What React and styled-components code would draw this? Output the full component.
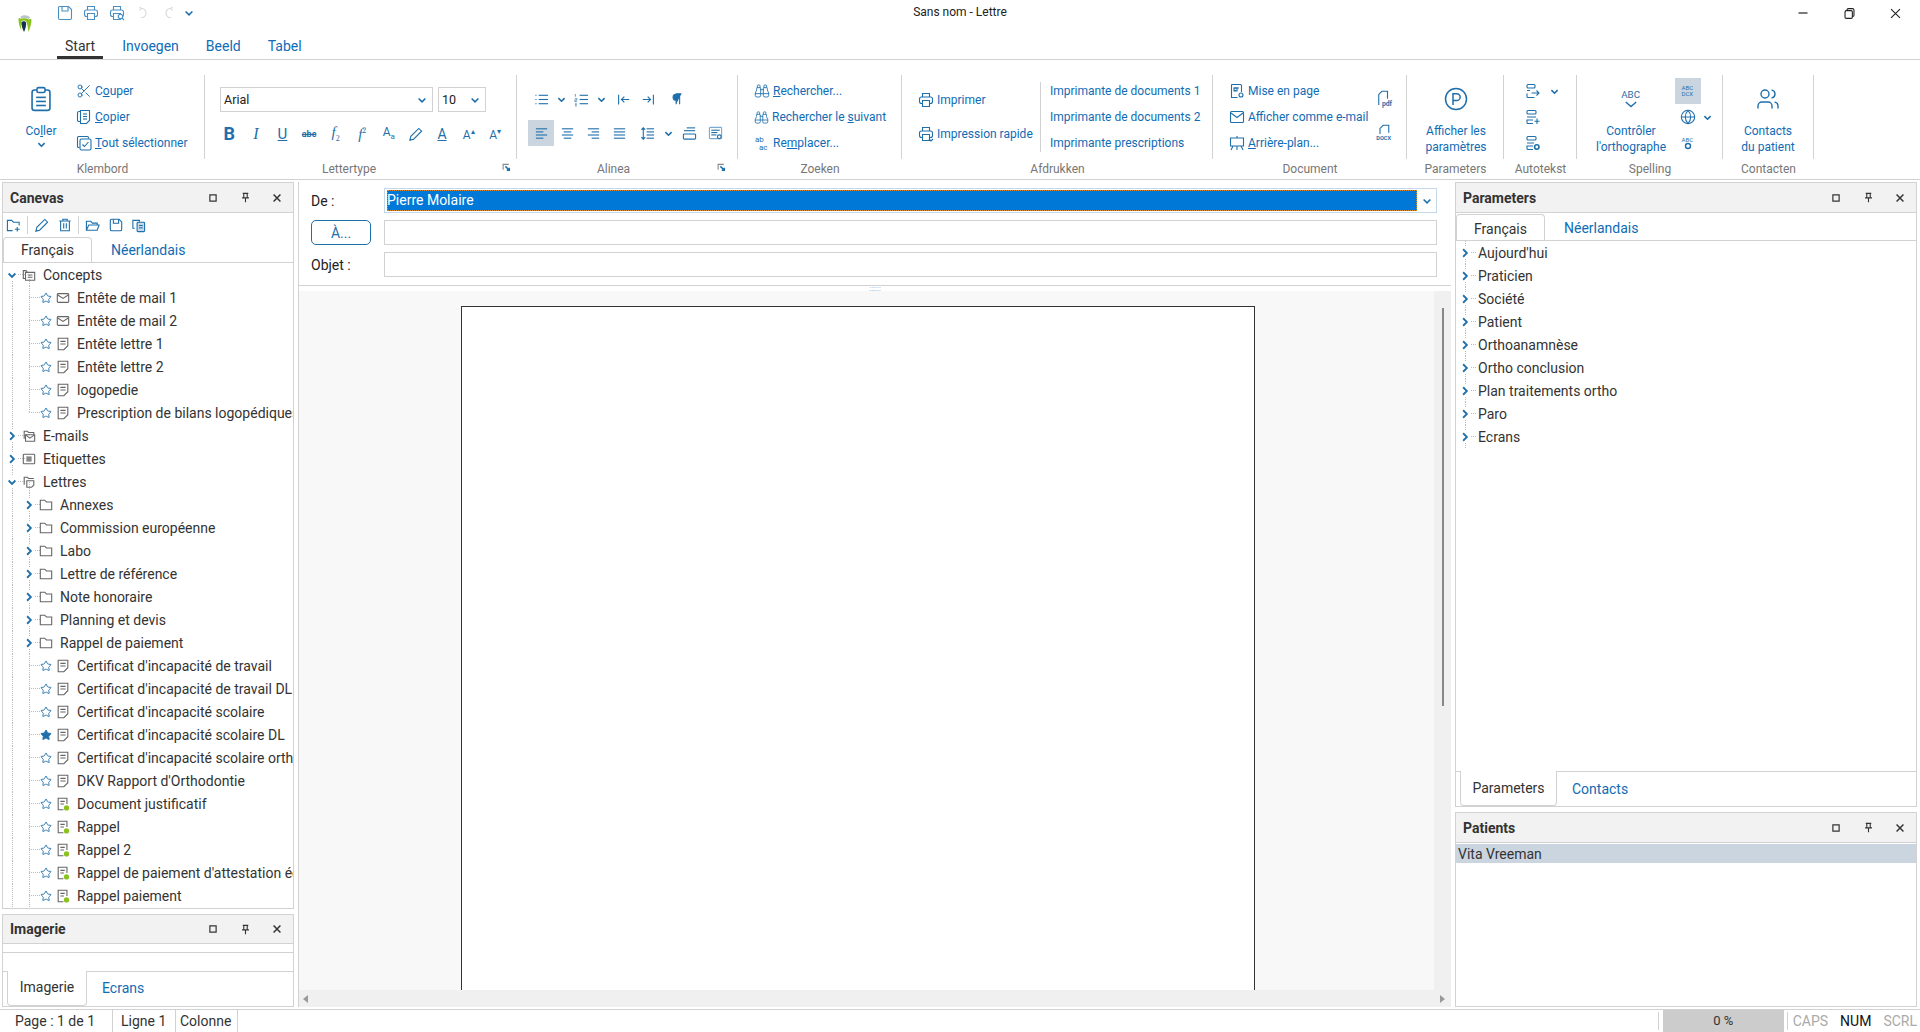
import React from "react";
import styled, { createGlobalStyle } from "styled-components";
import { Scissors, Binoculars, Globe, Star, Users } from "lucide-react";

const BLUE = "#1f6fab";
const LINK = "#0f6cb5";
const TEXT = "#333";
const LINE = "#d2d2d2";

const GlobalStyle = createGlobalStyle`
  html, body { margin: 0; height: 100%; background: #fff; overflow: hidden; }
  body { font-family: Roboto, "Liberation Sans", sans-serif; font-size: 14px; color: ${TEXT}; }
  * { box-sizing: border-box; }
`;

const Svg = styled.svg.attrs((p) => ({
  viewBox: "0 0 16 16",
  width: p.$s || 16,
  height: p.$s || 16,
}))`
  flex: none;
  fill: none;
  stroke: ${(p) => p.$c || BLUE};
  stroke-width: ${(p) => p.$w || 1.1};
  * { vector-effect: non-scaling-stroke; }
`;

const lines = (...ys) => ys.map(([x1, y, x2]) => <path key={y} d={`M${x1} ${y}H${x2}`} />);

const printer = (
  <>
    <path d="M4.5 5V1.5h7V5" />
    <rect x="1.5" y="5" width="13" height="6.5" rx="2" />
    <rect x="4.5" y="8.5" width="7" height="6" fill="#fff" />
  </>
);

const draw = {
  save: (
    <>
      <path d="M2.5 1.5h9l3 3v8.5a1.5 1.5 0 0 1-1.5 1.5H3A1.5 1.5 0 0 1 1.5 13V2.5a1 1 0 0 1 1-1z" />
      <path d="M5 1.5v4.5h6V1.5" />
    </>
  ),
  print: printer,
  preview: (
    <>
      {printer}
      <circle cx="11.5" cy="11.5" r="2.2" fill="#fff" />
      <path d="M13 13l2 2" />
    </>
  ),
  rapid: (
    <>
      {printer}
      <path d="M11 13l2 2 2-2" />
    </>
  ),
  undo: <path d="M6 2.5a5.5 5.5 0 1 1 0 11M6 2.5L4 1M6 2.5L4 5" />,
  redo: <path d="M10 2.5a5.5 5.5 0 1 0 0 11M10 2.5L12 1M10 2.5L12 5" />,
  chev: <path d="M3.5 6L8 10.5 12.5 6" />,
  chevR: <path d="M5.5 3L10.5 8 5.5 13" />,
  clipboard: (
    <>
      <rect x="2.5" y="2.5" width="11" height="12.5" rx="1.5" />
      <rect x="5.5" y="1" width="5" height="3" rx="1" fill="#fff" />
      {lines([5, 7, 11], [5, 9.5, 11], [5, 12, 11])}
    </>
  ),
  copy: (
    <>
      <path d="M4 2.5H3a1.5 1.5 0 0 0-1.5 1.5v7A1.5 1.5 0 0 0 3 12.5h1" />
      <path d="M4.5 1.5h9v10l-3 3h-6z" fill="#fff" />
      {lines([7, 5, 11], [7, 7.5, 11], [7, 10, 11])}
    </>
  ),
  selectAll: (
    <>
      <path d="M3.5 12.5H2.5a1 1 0 0 1-1-1v-9a1 1 0 0 1 1-1h9a1 1 0 0 1 1 1v1" />
      <rect x="4" y="4" width="11" height="11" rx="1.5" fill="#fff" />
      <path d="M6.5 9.5l2 2 4-4.5" />
    </>
  ),
  bullets: (
    <>
      <path d="M1 3.5h2M1 8h2M1 12.5h2" stroke="#7ba9cf" />
      {lines([5, 3.5, 15], [5, 8, 15], [5, 12.5, 15])}
    </>
  ),
  numbers: (
    <>
      <path d="M1.5 2v3M1 7h2v1.500H1V10h2M1 12h2M1 13.500h2M1 15h2" stroke="#7ba9cf" />
      {lines([6, 3.500, 15], [6, 8, 15], [6, 12.500, 15])}
    </>
  ),
  outdent: <path d="M2 2v12M15 8H6M9 4.500L5.500 8 9 11.500" />,
  indent: <path d="M14 2v12M1 8h9M7 4.500L10.500 8 7 11.500" />,
  pilcrow: <path d="M7 14V2h6M11 14V2M7 2.500a3.500 3.500 0 0 0 0 7" fill={BLUE} />,
  left: lines([2, 3, 14], [2, 6.300, 10], [2, 9.600, 14], [2, 13, 10]),
  center: lines([2, 3, 14], [4, 6.300, 12], [2, 9.600, 14], [4, 13, 12]),
  right: lines([2, 3, 14], [6, 6.300, 14], [2, 9.600, 14], [6, 13, 14]),
  justify: lines([2, 3, 14], [2, 6.300, 14], [2, 9.600, 14], [2, 13, 14]),
  spacing: (
    <>
      <path d="M3.500 2v12M1.500 4l2-2 2 2M1.500 12l2 2 2-2" />
      {lines([7, 3, 15], [7, 6.300, 15], [7, 9.600, 15], [7, 13, 15])}
    </>
  ),
  paraBox: (
    <>
      {lines([5, 2, 14], [2, 5, 14])}
      <rect x="1.500" y="8.500" width="13" height="5.500" rx="1" />
    </>
  ),
  paraSet: (
    <>
      <rect x="1.500" y="1.500" width="13" height="12" rx="1" stroke="#7ba9cf" />
      {lines([3.500, 4.500, 12.500], [3.500, 7, 10], [3.500, 9.500, 9])}
      <circle cx="12" cy="11.500" r="2" fill="#fff" />
    </>
  ),
  launcher: (
    <>
      <path d="M2 12V2.500h10" stroke="#888" />
      <path d="M6 6l7 7M13 8.500V13H8.500" strokeWidth="1.500" />
    </>
  ),
  replace: (
    <>
      <text x="1" y="7" fontSize="8" fill={BLUE} stroke="none">ab</text>
      <text x="5" y="15" fontSize="8" fill={BLUE} stroke="none">ac</text>
    </>
  ),
  mailBox: (
    <>
      <rect x="1.500" y="2.500" width="13" height="11" rx="1" />
      <path d="M2 4l6 4.500L14 4" />
    </>
  ),
  page: (
    <>
      <path d="M2.500 1.500h9a1 1 0 0 1 1 1V9M2.500 1.500v13h6" />
      <path d="M5 5h5M5 7.500h2" />
      <rect x="5" y="5" width="3" height="3" />
      <circle cx="12" cy="12" r="2" />
    </>
  ),
  easel: (
    <>
      <rect x="1.500" y="3" width="13" height="8" />
      <path d="M8 1v2M4 11l-2 4M12 11l2 4M8 11v4" />
    </>
  ),
  circleP: (
    <>
      <circle cx="8" cy="8" r="7" />
      <path d="M6 12V4.500h2.500a2.200 2.200 0 0 1 0 4.500H6" />
    </>
  ),
  autoIn: (
    <>
      <rect x="2" y="1.500" width="8" height="3.500" rx="1" />
      <path d="M2 7.500h3M2 10.500v3a1 1 0 0 0 1 1h6.500" />
      <path d="M6.500 10h7.500M11.500 7.500L14 10l-2.500 2.500" />
    </>
  ),
  autoAdd: (
    <>
      <rect x="2" y="1.500" width="9" height="3.500" rx="1" />
      <path d="M2 8h9M8 14.500H3a1 1 0 0 1-1-1V11h6" />
      <path d="M12 9.500v5.500M9.500 12.250h5" />
    </>
  ),
  autoSet: (
    <>
      <rect x="2" y="1.500" width="9" height="3.500" rx="1" />
      <path d="M2 8h7M8 14.500H3a1 1 0 0 1-1-1V11h6" />
      <circle cx="11.800" cy="12" r="2.200" strokeWidth="1.600" />
    </>
  ),
  folderPlus: (
    <>
      <path d="M7 13.500H1.500v-11h4.500l2 2h6V8" />
      <path d="M12 9.500v5M9.500 12h5" />
    </>
  ),
  pencil: <path d="M2 14l1-4 8.500-8.500 3 3L6 13z" />,
  trash: <path d="M1.500 3.500h13M5.500 3.500V1.500h5v2M3 3.500v11h10v-11M6.500 6v6M9.500 6v6" />,
  folderOpen: <path d="M1.500 13V3.500h4.500l2 2h5v2M1.500 13l2.500-5.500h11L13 13z" />,
  clipDoc: (
    <>
      <path d="M4 11H2V2.500h7V4" />
      <rect x="6.500" y="4.500" width="8" height="10" rx="1" fill={BLUE} fillOpacity=".25" />
      {lines([8.500, 8, 12.500], [8.500, 10.500, 12.500])}
    </>
  ),
  square: <rect x="3" y="3" width="10" height="10" />,
  pin: <path d="M4 2h8M5.500 2v6M10.500 2v6M3 8.500h10M8 8.500V15" />,
  close: <path d="M2.500 2.500l11 11M13.500 2.500l-11 11" />,
  minimize: <path d="M2 8h12" />,
  restore: (
    <>
      <rect x="2.500" y="4.500" width="9" height="9.500" rx="1.500" />
      <path d="M5 4.500V3.500A1.500 1.500 0 0 1 6.500 2h5A2 2 0 0 1 13.500 4v6A1.500 1.500 0 0 1 12 11.500h-.5" />
    </>
  ),
  treeStack: (
    <>
      <path d="M3.500 12H1.500V3h3l1.500 1.500" />
      <rect x="4" y="5" width="10.500" height="9" />
      <path d="M6.500 8h5.500M6.500 10.500h5.500" />
    </>
  ),
  treeMailFolder: (
    <>
      <path d="M2.500 11V2.500h3.500l1.500 1.500h6v2" />
      <rect x="4" y="6.500" width="10.500" height="7.500" />
      <path d="M4.500 7l4.500 3.500L14 7" />
    </>
  ),
  treeLabel: (
    <>
      <rect x="1.500" y="2.500" width="13" height="11" rx="1" />
      <rect x="5" y="5" width="6" height="6" fill="#888" stroke="none" />
    </>
  ),
  treeLetter: (
    <>
      <path d="M2.500 11V2.500h3.500l1.500 1.500h6" />
      <path d="M5.500 6.500h8v5l-2.500 2.500H5.500z" />
    </>
  ),
  folder: <path d="M1.500 13.500v-11h5l2 2h6v9z" />,
  mail: (
    <>
      <rect x="1.500" y="3" width="13" height="10" rx="1" />
      <path d="M2 4.500l6 4 6-4" />
    </>
  ),
  doc: (
    <>
      <path d="M2.500 1.500h11v8.500l-4.500 4.500H2.500z" />
      <path d="M5 5h6M5 8h6" />
    </>
  ),
  docGreen: (
    <>
      <path d="M8.500 14.500h-6v-13h10V8" />
      <path d="M5 5h5M5 8h4" />
      <circle cx="12" cy="12.500" r="3" fill="#8cc21f" stroke="none" />
    </>
  ),
};

const Icon = ({ name, s, c, w }) => (
  <Svg $s={s} $c={c} $w={w}>
    {draw[name]}
  </Svg>
);

const Shell = styled.div`
  height: 100vh;
  display: flex;
  flex-direction: column;
`;

/* title bar + ribbon tabs */
const Header = styled.header`
  position: relative;
  flex: none;
  height: 60px;
  display: flex;
  border-bottom: 1px solid ${LINE};
`;
const LogoBox = styled.div`
  width: 52px;
  padding: 14px 0 0 18px;
`;
const HeaderMain = styled.div`
  flex: 1;
`;
const QuickBar = styled.div`
  height: 30px;
  display: flex;
  align-items: center;
  padding-bottom: 4px;
`;
const QuickBtn = styled.span`
  width: ${(p) => p.$w || 26}px;
  display: flex;
  justify-content: center;
`;
const TabBar = styled.nav`
  display: flex;
  gap: 11px;
  margin-left: 5px;
`;
const RibbonTab = styled.div`
  height: 29px;
  padding: 8px 8px 0;
  color: ${(p) => (p.$active ? TEXT : LINK)};
  border-bottom: 3px solid ${(p) => (p.$active ? "#333" : "transparent")};
`;
const WindowTitle = styled.div`
  position: absolute;
  left: 0;
  right: 0;
  top: 5px;
  text-align: center;
  font-size: 12px;
  color: #222;
`;
const WindowButtons = styled.div`
  position: absolute;
  top: 0;
  right: 2px;
  display: flex;
`;
const WindowBtn = styled.span`
  width: 46px;
  height: 26px;
  display: flex;
  align-items: center;
  justify-content: center;
`;

/* ribbon */
const Ribbon = styled.div`
  flex: none;
  height: 120px;
  display: flex;
  border-bottom: 1px solid ${LINE};
`;
const Group = styled.section`
  position: relative;
  flex: none;
  width: ${(p) => p.$w}px;
  padding-top: 15px;
`;
const GroupBody = styled.div`
  height: 84px;
  display: flex;
  justify-content: ${(p) => p.$justify || "flex-start"};
  padding-left: ${(p) => p.$pad || 0}px;
  border-right: 1px solid ${LINE};
`;
const GroupLabel = styled.div`
  margin-top: 1px;
  padding-right: ${(p) => p.$pr || 0}px;
  text-align: center;
  font-size: 12px;
  line-height: 18px;
  color: #777;
`;
const Launcher = styled.span`
  position: absolute;
  right: ${(p) => p.$r}px;
  bottom: 7px;
  display: flex;
`;
const Stack = styled.div`
  display: flex;
  flex-direction: column;
  justify-content: center;
  width: ${(p) => (p.$w ? `${p.$w}px` : "auto")};
  padding-left: ${(p) => p.$pad || 0}px;
  border-right: ${(p) => (p.$divider ? `1px solid ${LINE}` : "0")};
  margin: ${(p) => (p.$divider ? "7px 0" : "0")};
`;
const SmallItem = styled.div`
  height: ${(p) => p.$h || 26}px;
  display: flex;
  align-items: center;
  gap: 3px;
  white-space: nowrap;
  font-size: 12px;
  color: ${LINK};
`;
const LargeBtn = styled.div`
  display: flex;
  flex-direction: column;
  align-items: center;
  width: ${(p) => (p.$w ? `${p.$w}px` : "auto")};
  margin-left: ${(p) => p.$ml || 0}px;
  font-size: 12px;
  line-height: 16px;
  color: ${LINK};
  text-align: center;
`;
const LargeIcon = styled.span`
  height: 48px;
  display: flex;
  align-items: center;
`;
const FontRow = styled.div`
  display: flex;
  gap: 5px;
  margin-top: 12px;
`;
const Combo = styled.div`
  width: ${(p) => p.$w}px;
  height: 25px;
  display: flex;
  align-items: center;
  justify-content: space-between;
  padding: 0 4px 0 3px;
  font-size: 12.500px;
  color: #222;
  border: 1px solid ${LINE};
`;
const ToolRow = styled.div`
  display: flex;
  align-items: center;
  margin: ${(p) => p.$m || "0"};
`;
const Tool = styled.span`
  width: ${(p) => p.$w || 26}px;
  height: 26px;
  display: flex;
  align-items: center;
  justify-content: center;
  color: ${BLUE};
  background: ${(p) => (p.$on ? "#cbd5e0" : "transparent")};
`;
const Glyph = styled.span`
  font-family: ${(p) => p.$serif ? '"Liberation Serif", serif' : 'Roboto, sans-serif'};
  font-size: ${(p) => p.$size || 13}px;
  font-weight: ${(p) => (p.$bold ? 700 : 400)};
  font-style: ${(p) => (p.$italic ? "italic" : "normal")};
  text-decoration: ${(p) => p.$deco || "none"};
  line-height: 1;
  white-space: nowrap;
  sub, sup { font-size: 8px; font-style: normal; }
`;
const TinyLabel = styled.text`
  font-family: Roboto, sans-serif;
  font-weight: ${(p) => (p.$bold ? 700 : 400)};
  fill: ${BLUE};
  stroke: none;
`;

/* main area */
const Main = styled.main`
  flex: 1;
  min-height: 0;
  display: flex;
  gap: 4px;
  padding: 2px 3px 2px 2px;
`;
const Column = styled.div`
  flex: none;
  width: ${(p) => p.$w}px;
  display: flex;
  flex-direction: column;
  gap: 5px;
`;
const Panel = styled.section`
  display: flex;
  flex-direction: column;
  flex: ${(p) => p.$flex || "none"};
  height: ${(p) => (p.$h ? `${p.$h}px` : "auto")};
  min-height: 0;
  border: 1px solid ${LINE};
  overflow: hidden;
`;
const PanelHead = styled.header`
  flex: none;
  height: ${(p) => p.$h || 30}px;
  display: flex;
  align-items: center;
  padding-left: 7px;
  background: #f2f2f2;
  border-bottom: 1px solid ${LINE};
  font-weight: 700;
  font-size: 14px;
`;
const PanelTitle = styled.span`
  flex: 1;
`;
const HeadBtn = styled.span`
  width: 32px;
  display: flex;
  justify-content: center;
`;
const PanelTools = styled.div`
  flex: none;
  height: 24px;
  display: flex;
  align-items: center;
  margin-left: -1px;
`;
const ToolBtn = styled.span`
  width: 23px;
  display: flex;
  justify-content: center;
`;
const ToolSep = styled.i`
  width: 1px;
  height: 18px;
  margin: 0 2px;
  background: ${LINE};
`;
const TabStrip = styled.div`
  flex: none;
  display: flex;
  height: ${(p) => p.$h || 26}px;
  margin-top: ${(p) => p.$mt || 0}px;
  ${(p) => (p.$bottom ? `border-top: 1px solid ${LINE};` : `border-bottom: 1px solid ${LINE};`)}
`;
const PanelTab = styled.div`
  width: ${(p) => (p.$w ? `${p.$w}px` : "auto")};
  padding: ${(p) => p.$pt || 0}px ${(p) => (p.$w ? 0 : 14)}px ${(p) => p.$pb || 0}px ${(p) => (p.$w ? 0 : 15)}px;
  display: flex;
  align-items: center;
  justify-content: center;
  color: ${(p) => (p.$active ? TEXT : LINK)};
  margin-left: ${(p) => p.$ml || 0}px;
  ${(p) =>
    p.$active &&
    (p.$bottom
      ? `border: 1px solid ${LINE}; border-top: 0; border-radius: 0 0 4px 4px; margin-top: -1px; background: #fff;`
      : `border: 1px solid ${LINE}; border-bottom: 0; border-radius: 4px 4px 0 0; height: 100%; background: #fff;`)}
`;
const Filler = styled.div`
  flex: 1;
  min-height: 0;
  overflow: hidden;
`;
const EmptyBar = styled.div`
  flex: none;
  height: 9px;
  border-bottom: 1px solid ${LINE};
`;

const vDots = (x, half) =>
  `repeating-linear-gradient(to bottom,#bbb 0 1px,transparent 1px 2px) ${x}px ${
    half === "top" ? "0" : half === "bottom" ? "100%" : "0"
  } / 1px ${half ? "50%" : "100%"} no-repeat`;
const hDots = (x, w) =>
  `repeating-linear-gradient(to right,#bbb 0 1px,transparent 1px 2px) ${x}px 50% / ${w}px 1px no-repeat`;

const TreeRow = styled.div`
  height: 23px;
  display: flex;
  align-items: center;
  white-space: nowrap;
  padding-left: ${(p) => p.$pad}px;
  background: ${(p) => p.$lines};
`;
const Twisty = styled.span`
  width: 12px;
  display: flex;
  justify-content: center;
  margin-right: ${(p) => p.$mr || 4}px;
  background: #fff;
`;
const TreeIcon = styled.span`
  width: ${(p) => p.$w}px;
  margin-right: ${(p) => p.$mr}px;
  display: flex;
  justify-content: center;
  flex: none;
`;

const leaf = (label, icon, opts = {}) => ({ type: "doc", label, icon, ...opts });
const branch = (label) => ({ type: "folder", label });
const root = (label, icon, open, first) => ({ type: "root", label, icon, open, first });

const canevas = [
  root("Concepts", "treeStack", true, true),
  leaf("Entête de mail 1", "mail"),
  leaf("Entête de mail 2", "mail"),
  leaf("Entête lettre 1", "doc"),
  leaf("Entête lettre 2", "doc"),
  leaf("logopedie", "doc"),
  leaf("Prescription de bilans logopédiques", "doc", { last: true }),
  root("E-mails", "treeMailFolder"),
  root("Etiquettes", "treeLabel"),
  root("Lettres", "treeLetter", true),
  branch("Annexes"),
  branch("Commission européenne"),
  branch("Labo"),
  branch("Lettre de référence"),
  branch("Note honoraire"),
  branch("Planning et devis"),
  branch("Rappel de paiement"),
  leaf("Certificat d'incapacité de travail", "doc"),
  leaf("Certificat d'incapacité de travail DL", "doc"),
  leaf("Certificat d'incapacité scolaire", "doc"),
  leaf("Certificat d'incapacité scolaire DL", "doc", { starred: true }),
  leaf("Certificat d'incapacité scolaire ortho", "doc"),
  leaf("DKV Rapport d'Orthodontie", "doc"),
  leaf("Document justificatif", "docGreen"),
  leaf("Rappel", "docGreen"),
  leaf("Rappel 2", "docGreen"),
  leaf("Rappel de paiement d'attestation écrite", "docGreen"),
  leaf("Rappel paiement", "docGreen"),
];

const parameters = [
  "Aujourd'hui",
  "Praticien",
  "Société",
  "Patient",
  "Orthoanamnèse",
  "Ortho conclusion",
  "Plan traitements ortho",
  "Paro",
  "Ecrans",
];

const CanevasRow = ({ item }) => {
  if (item.type === "root") {
    const bg = [vDots(9, item.first ? "bottom" : null), hDots(15, 7)];
    if (item.open) bg.push(vDots(26, "bottom"));
    return (
      <TreeRow $pad={3} $lines={bg.join(",")}>
        <Twisty>
          <Icon name={item.open ? "chev" : "chevR"} s={12} w={1.800} />
        </Twisty>
        <TreeIcon $w={14} $mr={7}>
          <Icon name={item.icon} s={14} c="#666" />
        </TreeIcon>
        {item.label}
      </TreeRow>
    );
  }
  if (item.type === "folder") {
    return (
      <TreeRow $pad={20} $lines={[vDots(9), vDots(26), hDots(32, 5)].join(",")}>
        <Twisty>
          <Icon name="chevR" s={12} w={1.800} />
        </Twisty>
        <TreeIcon $w={14} $mr={7}>
          <Icon name="folder" s={14} c="#666" />
        </TreeIcon>
        {item.label}
      </TreeRow>
    );
  }
  return (
    <TreeRow
      $pad={37}
      $lines={[vDots(9), vDots(26, item.last ? "top" : null), hDots(26, 11)].join(",")}
    >
      <TreeIcon $w={12} $mr={4}>
        <Star size={14} color={BLUE} strokeWidth={1.800} fill={item.starred ? BLUE : "none"} />
      </TreeIcon>
      <TreeIcon $w={14} $mr={7}>
        <Icon name={item.icon} s={14} c="#666" />
      </TreeIcon>
      {item.label}
    </TreeRow>
  );
};

const PanelHeader = ({ title, h }) => (
  <PanelHead $h={h}>
    <PanelTitle>{title}</PanelTitle>
    <HeadBtn>
      <Icon name="square" s={10} c="#333" w={1.200} />
    </HeadBtn>
    <HeadBtn>
      <Icon name="pin" s={11} c="#333" w={1.100} />
    </HeadBtn>
    <HeadBtn>
      <Icon name="close" s={10} c="#333" w={1.500} />
    </HeadBtn>
  </PanelHead>
);

/* centre editor */
const Editor = styled.div`
  flex: none;
  width: ${(p) => p.$w}px;
  display: flex;
  flex-direction: column;
  border-left: 1px solid ${LINE};
`;
const HeaderForm = styled.div`
  flex: none;
  display: grid;
  grid-template-columns: 73px 1fr;
  grid-auto-rows: 25px;
  row-gap: 7px;
  align-items: center;
  padding: 6px 14px 8px 12px;
  border-bottom: 1px solid ${LINE};
`;
const FieldLabel = styled.label`
  color: #222;
  margin-top: ${(p) => p.$mt || 0}px;
`;
const ToButton = styled.button`
  width: 60px;
  height: 25px;
  padding: 0;
  font: inherit;
  color: ${BLUE};
  background: #fff;
  border: 1px solid ${BLUE};
  border-radius: 5px;
`;
const Field = styled.div`
  height: 25px;
  border: 1px solid ${LINE};
`;
const SelectField = styled.div`
  height: 25px;
  display: flex;
  align-items: center;
  padding: 1px 3px 1px 2px;
  gap: 4px;
  border: 1px solid #c5d8ea;
`;
const Selected = styled.div`
  flex: 1;
  height: 21px;
  line-height: 21px;
  color: #fff;
  background: #0078d7;
  outline: 1px dotted #d98b2b;
  outline-offset: -1px;
`;
const Splitter = styled.div`
  flex: none;
  height: 5px;
  display: flex;
  justify-content: center;
  align-items: center;
  color: #999;
  font-size: 8px;
  line-height: 5px;
  overflow: hidden;
`;
const DocRow = styled.div`
  flex: 1;
  min-height: 0;
  display: flex;
`;
const DocArea = styled.div`
  flex: 1;
  min-width: 0;
  padding: 15px 0 0 162px;
  background: #f8f8f8;
  overflow: hidden;
`;
const Sheet = styled.div`
  width: 794px;
  height: 1123px;
  background: #fff;
  border: 1px solid #333;
`;
const VScroll = styled.div`
  flex: none;
  width: 17px;
  padding: 17px 0 0 8px;
  background: #f0f0f0;
`;
const VThumb = styled.div`
  width: 2px;
  height: 398px;
  background: #888;
`;
const HScroll = styled.div`
  flex: none;
  height: 17px;
  display: flex;
  align-items: center;
  justify-content: space-between;
  padding: 0 6px 0 4px;
  background: #f0f0f0;
`;
const Arrow = styled.i`
  width: 0;
  height: 0;
  border-top: 4px solid transparent;
  border-bottom: 4px solid transparent;
  ${(p) => (p.$right ? "border-left: 5px solid #999;" : "border-right: 5px solid #999;")}
`;

const PatientRow = styled.div`
  height: 19px;
  margin-top: 1px;
  padding-left: 2px;
  line-height: 20px;
  background: #cbd5e0;
`;

/* status bar */
const StatusBar = styled.footer`
  flex: none;
  height: 23px;
  display: flex;
  align-items: center;
  border-top: 1px solid ${LINE};
`;
const StatusCell = styled.div`
  width: ${(p) => p.$w}px;
  height: 100%;
  padding-left: ${(p) => p.$pad}px;
  line-height: 22px;
  border-right: 1px solid ${LINE};
  white-space: nowrap;
`;
const StatusRight = styled.div`
  margin-left: auto;
  height: 100%;
  display: flex;
  align-items: center;
  padding-right: 3px;
`;
const Progress = styled.div`
  width: 121px;
  height: 100%;
  margin: 0 3px 0 4px;
  text-align: center;
  line-height: 22px;
  background: #ccc;
  font-size: 13px;
`;
const SepLine = styled.i`
  width: 1px;
  height: 18px;
  background: ${LINE};
`;
const KeyState = styled.span`
  margin-left: ${(p) => p.$ml}px;
  color: ${(p) => (p.$on ? "#111" : "#aaa")};
`;

const Logo = () => (
  <svg width="14" height="18" viewBox="0 0 14 18">
    <path d="M2.500 3C4 .5 10 .5 12 3.500L11 5C8.500 3.500 5.500 3.500 3.500 5z" fill="#b9c4cc" />
    <path d="M.5 5C1 3.500 2 3.500 3 5 5 3.800 8 3.800 11 5.500 12 4.500 13 4.500 13.500 6 13.500 10 12 14 10.500 18 10 14 9.500 11 8.500 8 7.500 6.500 5 6 3.500 7.500 2.500 9 3 13 3.500 17 1.500 13 .5 9 .5 5z" fill="#8cc21f" />
    <path d="M3.500 8.500C4.500 6.800 7 6.800 8 8.500 8.500 11 7.500 15 6 18 5 16 3 11 3.500 8.500z" fill="#12304f" />
  </svg>
);

export default function App() {
  return (
    <Shell>
      <GlobalStyle />
      <Header>
        <LogoBox>
          <Logo />
        </LogoBox>
        <HeaderMain>
          <QuickBar>
            <QuickBtn><Icon name="save" c="#4a8fc2" /></QuickBtn>
            <QuickBtn><Icon name="print" c="#4a8fc2" /></QuickBtn>
            <QuickBtn><Icon name="preview" c="#4a8fc2" /></QuickBtn>
            <QuickBtn><Icon name="undo" s={14} c="#d8d8d8" /></QuickBtn>
            <QuickBtn $w={25}><Icon name="redo" s={14} c="#d8d8d8" /></QuickBtn>
            <QuickBtn $w={16}><Icon name="chev" s={12} w={1.600} /></QuickBtn>
          </QuickBar>
          <TabBar>
            <RibbonTab $active>Start</RibbonTab>
            <RibbonTab>Invoegen</RibbonTab>
            <RibbonTab>Beeld</RibbonTab>
            <RibbonTab>Tabel</RibbonTab>
          </TabBar>
        </HeaderMain>
        <WindowTitle>Sans nom - Lettre</WindowTitle>
        <WindowButtons>
          <WindowBtn><Icon name="minimize" s={12} c="#222" w={1.200} /></WindowBtn>
          <WindowBtn><Icon name="restore" s={13} c="#222" /></WindowBtn>
          <WindowBtn><Icon name="close" s={13} c="#222" /></WindowBtn>
        </WindowButtons>
      </Header>

      <Ribbon>
        <Group $w={205}>
          <GroupBody $pad={21}>
            <LargeBtn $w={40}>
              <LargeIcon><Icon name="clipboard" s={26} w={1.600} /></LargeIcon>
              <span>Co<u>l</u>ler</span>
              <Icon name="chev" s={11} w={1.600} />
            </LargeBtn>
            <Stack $pad={15}>
              <SmallItem><Scissors size={16} color={BLUE} strokeWidth={1.400} /><span>C<u>o</u>uper</span></SmallItem>
              <SmallItem><Icon name="copy" /><span><u>C</u>opier</span></SmallItem>
              <SmallItem><Icon name="selectAll" /><span><u>T</u>out sélectionner</span></SmallItem>
            </Stack>
          </GroupBody>
          <GroupLabel>Klembord</GroupLabel>
        </Group>

        <Group $w={312}>
          <GroupBody $pad={15}>
            <div>
              <FontRow>
                <Combo $w={213}>Arial<Icon name="chev" s={12} w={1.600} /></Combo>
                <Combo $w={48}>10<Icon name="chev" s={12} w={1.600} /></Combo>
              </FontRow>
              <ToolRow $m="9px 0 0 -4px">
                <Tool $w={26.600}><Glyph $size={18} $bold>B</Glyph></Tool>
                <Tool $w={26.600}><Glyph $size={16} $italic $serif>I</Glyph></Tool>
                <Tool $w={26.600}><Glyph $size={15} $deco="underline">U</Glyph></Tool>
                <Tool $w={26.600}><Glyph $size={9} $bold $deco="line-through">abc</Glyph></Tool>
                <Tool $w={26.600}><Glyph $size={15} $italic $serif>f<sub>2</sub></Glyph></Tool>
                <Tool $w={26.600}><Glyph $size={15} $italic $serif>f<sup>2</sup></Glyph></Tool>
                <Tool $w={26.600}><Glyph $size={12}>A<sub>a</sub></Glyph></Tool>
                <Tool $w={26.600}><Icon name="pencil" s={15} /></Tool>
                <Tool $w={26.600}><Glyph $size={14} $deco="underline">A</Glyph></Tool>
                <Tool $w={26.600}><Glyph $size={12}>A<sup>▴</sup></Glyph></Tool>
                <Tool $w={26.600}><Glyph $size={12}>A<sup>▾</sup></Glyph></Tool>
              </ToolRow>
            </div>
          </GroupBody>
          <GroupLabel $pr={24}>Lettertype</GroupLabel>
          <Launcher $r={6}><Icon name="launcher" s={9} /></Launcher>
        </Group>

        <Group $w={221}>
          <GroupBody $pad={11}>
            <div>
              <ToolRow $m="11px 0 0 0">
                <Tool><Icon name="bullets" s={15} /></Tool>
                <Tool $w={14}><Icon name="chev" s={11} w={1.600} /></Tool>
                <Tool><Icon name="numbers" s={15} /></Tool>
                <Tool $w={14}><Icon name="chev" s={11} w={1.600} /></Tool>
                <Tool $w={3} />
                <Tool $w={25}><Icon name="outdent" s={13} /></Tool>
                <Tool $w={25}><Icon name="indent" s={13} /></Tool>
                <Tool $w={3} />
                <Tool><Icon name="pilcrow" s={14} /></Tool>
              </ToolRow>
              <ToolRow $m="8px 0 0 0">
                <Tool $on><Icon name="left" s={15} /></Tool>
                <Tool><Icon name="center" s={15} /></Tool>
                <Tool><Icon name="right" s={15} /></Tool>
                <Tool><Icon name="justify" s={15} /></Tool>
                <Tool $w={2} />
                <Tool><Icon name="spacing" s={15} /></Tool>
                <Tool $w={16}><Icon name="chev" s={11} w={1.600} /></Tool>
                <Tool><Icon name="paraBox" s={15} /></Tool>
                <Tool><Icon name="paraSet" s={15} /></Tool>
              </ToolRow>
            </div>
          </GroupBody>
          <GroupLabel $pr={28}>Alinea</GroupLabel>
          <Launcher $r={12}><Icon name="launcher" s={9} /></Launcher>
        </Group>

        <Group $w={164}>
          <GroupBody $pad={16}>
            <Stack>
              <SmallItem><Binoculars size={16} color={BLUE} strokeWidth={1.300} /><span><u>R</u>echercher...</span></SmallItem>
              <SmallItem><Binoculars size={15} color={BLUE} strokeWidth={1.300} /><span>Rechercher le <u>s</u>uivant</span></SmallItem>
              <SmallItem><Icon name="replace" /><span>Re<u>m</u>placer...</span></SmallItem>
            </Stack>
          </GroupBody>
          <GroupLabel>Zoeken</GroupLabel>
        </Group>

        <Group $w={311}>
          <GroupBody $pad={16}>
            <Stack $w={123} $divider>
              <SmallItem $h={34}><Icon name="print" />Imprimer</SmallItem>
              <SmallItem $h={34}><Icon name="rapid" />Impression rapide</SmallItem>
            </Stack>
            <Stack $pad={9}>
              <SmallItem>Imprimante de documents 1</SmallItem>
              <SmallItem>Imprimante de documents 2</SmallItem>
              <SmallItem>Imprimante prescriptions</SmallItem>
            </Stack>
          </GroupBody>
          <GroupLabel>Afdrukken</GroupLabel>
        </Group>

        <Group $w={194}>
          <GroupBody $pad={16}>
            <Stack $w={146}>
              <SmallItem><Icon name="page" />Mise en page</SmallItem>
              <SmallItem><Icon name="mailBox" />Afficher comme e-mail</SmallItem>
              <SmallItem><Icon name="easel" /><span><u>A</u>rrière-plan...</span></SmallItem>
            </Stack>
            <Stack>
              <SmallItem $h={34}>
                <Svg $s={20}>
                  <path d="M3 8V3.500L5.500 1H10v6M3 8v4" />
                  <TinyLabel x="5.500" y="12.500" fontSize="5.500" $bold>pdf</TinyLabel>
                </Svg>
              </SmallItem>
              <SmallItem $h={34}>
                <Svg $s={20}>
                  <path d="M4 8V3.500L6.500 1H11v6" />
                  <TinyLabel x="1" y="13" fontSize="4.500" $bold>DOCX</TinyLabel>
                </Svg>
              </SmallItem>
            </Stack>
          </GroupBody>
          <GroupLabel>Document</GroupLabel>
        </Group>

        <Group $w={97}>
          <GroupBody $justify="center">
            <LargeBtn $ml={2}>
              <LargeIcon><Icon name="circleP" s={24} w={1.500} /></LargeIcon>
              Afficher les<br />paramètres
            </LargeBtn>
          </GroupBody>
          <GroupLabel>Parameters</GroupLabel>
        </Group>

        <Group $w={73}>
          <GroupBody $pad={21}>
            <Stack>
              <SmallItem><Icon name="autoIn" /><Tool $w={20}><Icon name="chev" s={11} w={1.600} /></Tool></SmallItem>
              <SmallItem><Icon name="autoAdd" /></SmallItem>
              <SmallItem><Icon name="autoSet" /></SmallItem>
            </Stack>
          </GroupBody>
          <GroupLabel>Autotekst</GroupLabel>
        </Group>

        <Group $w={146}>
          <GroupBody>
            <LargeBtn $w={88} $ml={10}>
              <LargeIcon>
                <Svg $s={24} $w={1.400}>
                  <TinyLabel x="1.500" y="7.500" fontSize="6.500">ABC</TinyLabel>
                  <path d="M4.500 10L8 13 11.500 10" />
                </Svg>
              </LargeIcon>
              Contrôler<br />l'orthographe
            </LargeBtn>
            <Stack>
              <Tool $on>
                <Svg $s={16}>
                  <TinyLabel x="1.500" y="7" fontSize="6">ABC</TinyLabel>
                  <TinyLabel x="1.500" y="13" fontSize="6">DCX</TinyLabel>
                </Svg>
              </Tool>
              <ToolRow>
                <Tool><Globe size={16} color={BLUE} strokeWidth={1.600} /></Tool>
                <Tool $w={12}><Icon name="chev" s={11} w={1.600} /></Tool>
              </ToolRow>
              <Tool>
                <Svg $s={16}>
                  <TinyLabel x="1.500" y="7" fontSize="6">ABC</TinyLabel>
                  <circle cx="8" cy="11" r="2.500" strokeWidth="1.400" />
                </Svg>
              </Tool>
            </Stack>
          </GroupBody>
          <GroupLabel>Spelling</GroupLabel>
        </Group>

        <Group $w={91}>
          <GroupBody $justify="center">
            <LargeBtn>
              <LargeIcon><Users size={24} color={BLUE} strokeWidth={1.400} /></LargeIcon>
              Contacts<br />du patient
            </LargeBtn>
          </GroupBody>
          <GroupLabel>Contacten</GroupLabel>
        </Group>
      </Ribbon>

      <Main>
        <Column $w={292}>
          <Panel $flex="1">
            <PanelHeader title="Canevas" />
            <PanelTools>
              <ToolBtn><Icon name="folderPlus" s={15} /></ToolBtn>
              <ToolSep />
              <ToolBtn><Icon name="pencil" s={15} /></ToolBtn>
              <ToolBtn><Icon name="trash" s={14} /></ToolBtn>
              <ToolSep />
              <ToolBtn><Icon name="folderOpen" s={15} /></ToolBtn>
              <ToolBtn><Icon name="save" s={14} /></ToolBtn>
              <ToolBtn><Icon name="clipDoc" s={15} /></ToolBtn>
            </PanelTools>
            <TabStrip>
              <PanelTab $active $w={89}>Français</PanelTab>
              <PanelTab $ml={4}>Néerlandais</PanelTab>
            </TabStrip>
            <Filler>
              {canevas.map((item) => (
                <CanevasRow key={item.label} item={item} />
              ))}
            </Filler>
          </Panel>
          <Panel $h={93}>
            <PanelHeader title="Imagerie" h={29} />
            <EmptyBar />
            <Filler />
            <TabStrip $bottom $h={35}>
              <PanelTab $active $bottom $w={80} $ml={4} $pb={2}>Imagerie</PanelTab>
              <PanelTab $pb={2}>Ecrans</PanelTab>
            </TabStrip>
          </Panel>
        </Column>

        <Editor $w={1153}>
          <HeaderForm>
            <FieldLabel>De :</FieldLabel>
            <SelectField>
              <Selected>Pierre Molaire</Selected>
              <Icon name="chev" s={12} w={1.600} />
            </SelectField>
            <div><ToButton>À...</ToButton></div>
            <Field />
            <FieldLabel>Objet :</FieldLabel>
            <Field />
          </HeaderForm>
          <Splitter>::::::</Splitter>
          <DocRow>
            <DocArea>
              <Sheet />
            </DocArea>
            <VScroll>
              <VThumb />
            </VScroll>
          </DocRow>
          <HScroll>
            <Arrow />
            <Arrow $right />
          </HScroll>
        </Editor>

        <Column $w={462}>
          <Panel $flex="1">
            <PanelHeader title="Parameters" />
            <TabStrip $mt={1} $h={27}>
              <PanelTab $active $w={89} $pt={2}>Français</PanelTab>
              <PanelTab $ml={4} $pt={2}>Néerlandais</PanelTab>
            </TabStrip>
            <Filler>
              {parameters.map((label) => (
                <TreeRow key={label} $pad={3} $lines={[vDots(9), hDots(15, 6)].join(",")}>
                  <Twisty $mr={7}>
                    <Icon name="chevR" s={12} w={1.800} />
                  </Twisty>
                  {label}
                </TreeRow>
              ))}
            </Filler>
            <TabStrip $bottom $h={35}>
              <PanelTab $active $bottom $w={97} $ml={4}>Parameters</PanelTab>
              <PanelTab>Contacts</PanelTab>
            </TabStrip>
          </Panel>
          <Panel $h={195}>
            <PanelHeader title="Patients" />
            <PatientRow>Vita Vreeman</PatientRow>
          </Panel>
        </Column>
      </Main>

      <StatusBar>
        <StatusCell $w={113} $pad={15}>Page : 1 de 1</StatusCell>
        <StatusCell $w={63} $pad={8}>Ligne 1</StatusCell>
        <StatusCell $w={62} $pad={4}>Colonne</StatusCell>
        <StatusRight>
          <SepLine />
          <Progress>0 %</Progress>
          <SepLine />
          <KeyState $ml={5}>CAPS</KeyState>
          <KeyState $ml={12} $on>NUM</KeyState>
          <KeyState $ml={12}>SCRL</KeyState>
        </StatusRight>
      </StatusBar>
    </Shell>
  );
}
